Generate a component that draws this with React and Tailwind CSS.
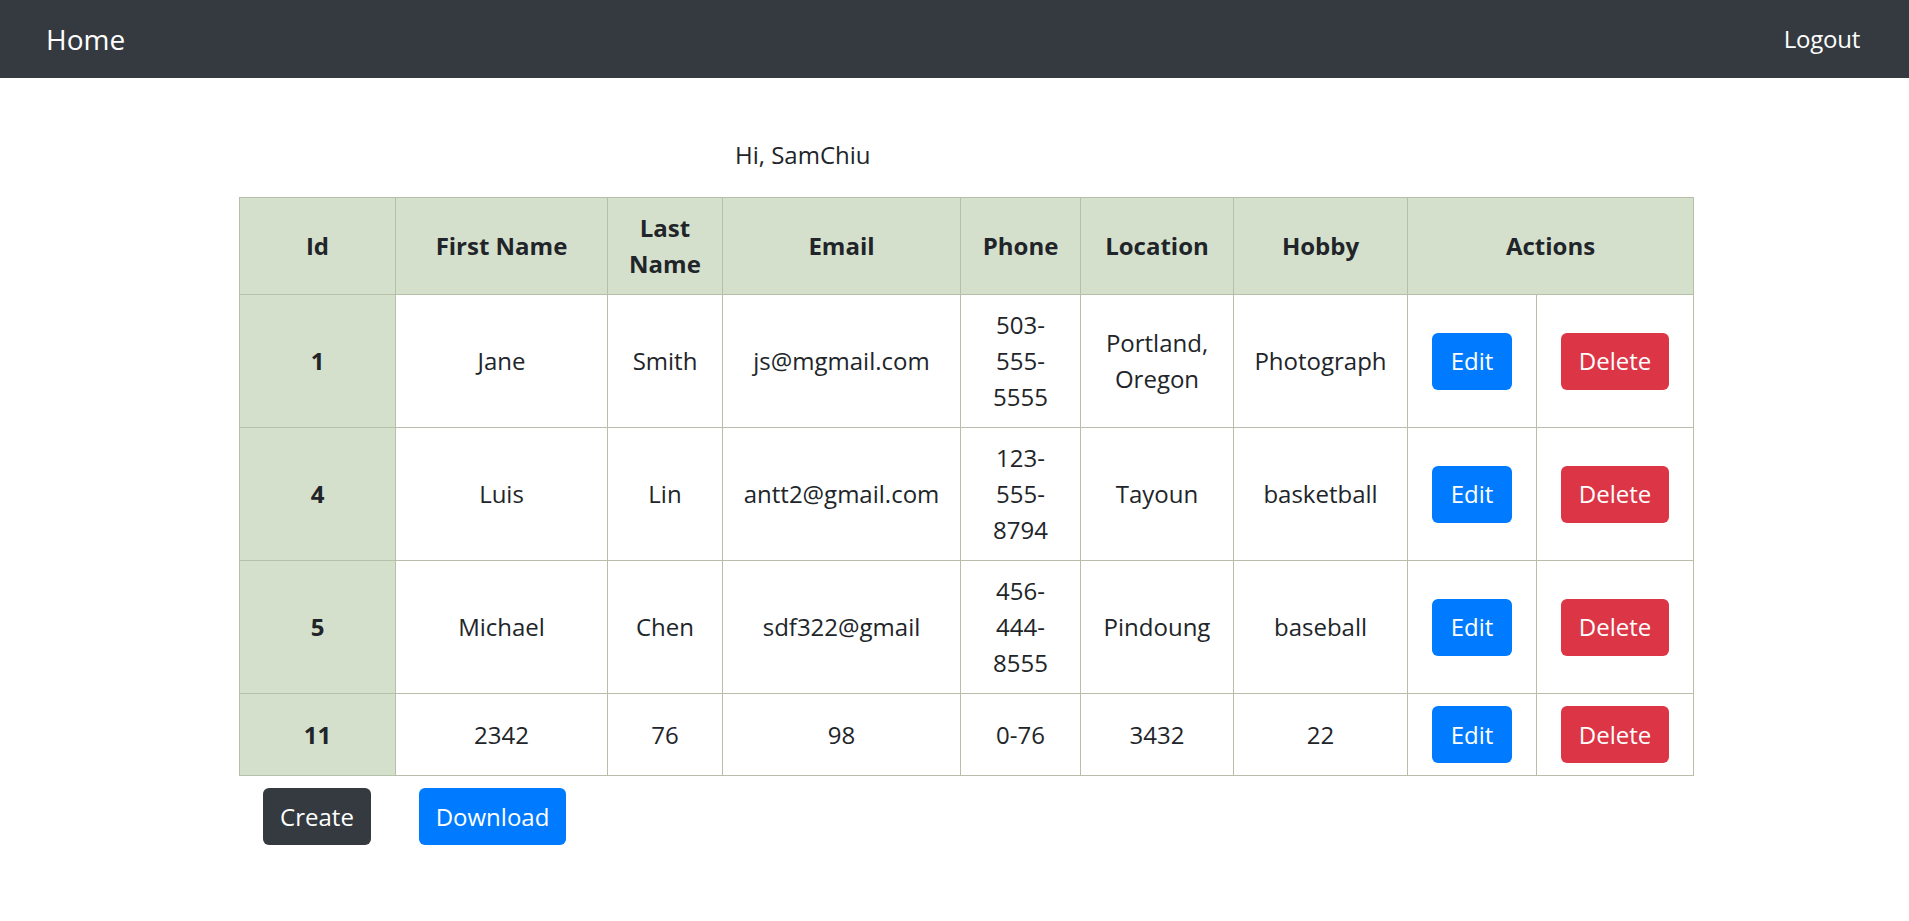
const ROWS = [
  { id: 1, first: 'Jane', last: 'Smith', email: 'js@mgmail.com', phone: '503-555-5555', location: 'Portland, Oregon', hobby: 'Photograph' },
  { id: 4, first: 'Luis', last: 'Lin', email: 'antt2@gmail.com', phone: '123-555-8794', location: 'Tayoun', hobby: 'basketball' },
  { id: 5, first: 'Michael', last: 'Chen', email: 'sdf322@gmail', phone: '456-444-8555', location: 'Pindoung', hobby: 'baseball' },
  { id: 11, first: '2342', last: '76', email: '98', phone: '0-76', location: '3432', hobby: '22' },
]

const HEADERS = ['Id', 'First Name', 'Last Name', 'Email', 'Phone', 'Location', 'Hobby']

const cell = 'border border-[#b7bfaa] px-[12px] py-[12px] text-center align-middle'

export default function App() {
  return (
    <div className="min-h-screen bg-white font-['Open_Sans',sans-serif] text-[24px] leading-[36px] text-[#212529]">
      <nav className="flex h-[78px] items-center justify-between bg-[#343a40] pl-[46px] pr-[49px] text-white">
        <a href="#" className="text-[28px] leading-[42px]">
          Home
        </a>
        <a href="#" className="text-[24px] tracking-[-0.01em]">
          Logout
        </a>
      </nav>

      <main className="pl-[239px]">
        <p className="mt-[59px] pl-[496px]">Hi, SamChiu</p>

        <table className="mt-[24px] w-[1454px] table-fixed border-collapse border border-[#b7bfaa]">
          <colgroup>
            <col className="w-[156px]" />
            <col className="w-[212px]" />
            <col className="w-[115px]" />
            <col className="w-[238px]" />
            <col className="w-[120px]" />
            <col className="w-[153px]" />
            <col className="w-[174px]" />
            <col className="w-[129px]" />
            <col className="w-[157px]" />
          </colgroup>
          <thead>
            <tr className="bg-[#d5e0cc]">
              {HEADERS.map((h) => (
                <th key={h} className={`${cell} font-bold`}>
                  {h}
                </th>
              ))}
              <th colSpan={2} className={`${cell} font-bold`}>
                Actions
              </th>
            </tr>
          </thead>
          <tbody>
            {ROWS.map((r) => (
              <tr key={r.id}>
                <th className={`${cell} bg-[#d5e0cc] font-bold`}>{r.id}</th>
                <td className={cell}>{r.first}</td>
                <td className={cell}>{r.last}</td>
                <td className={cell}>{r.email}</td>
                <td className={cell}>{r.phone}</td>
                <td className={cell}>{r.location}</td>
                <td className={cell}>{r.hobby}</td>
                <td className={cell}>
                  <button
                    type="button"
                    className="h-[57px] w-[80px] rounded-[6px] bg-[#007bff] text-white"
                  >
                    Edit
                  </button>
                </td>
                <td className={cell}>
                  <button
                    type="button"
                    className="h-[57px] w-[108px] rounded-[6px] bg-[#dc3545] text-white"
                  >
                    Delete
                  </button>
                </td>
              </tr>
            ))}
          </tbody>
        </table>

        <div className="mt-[12px] flex gap-[48px] pl-[24px]">
          <button type="button" className="h-[57px] w-[108px] rounded-[6px] bg-[#343a40] text-white">
            Create
          </button>
          <button type="button" className="h-[57px] w-[147px] rounded-[6px] bg-[#007bff] text-white">
            Download
          </button>
        </div>
      </main>
    </div>
  )
}
